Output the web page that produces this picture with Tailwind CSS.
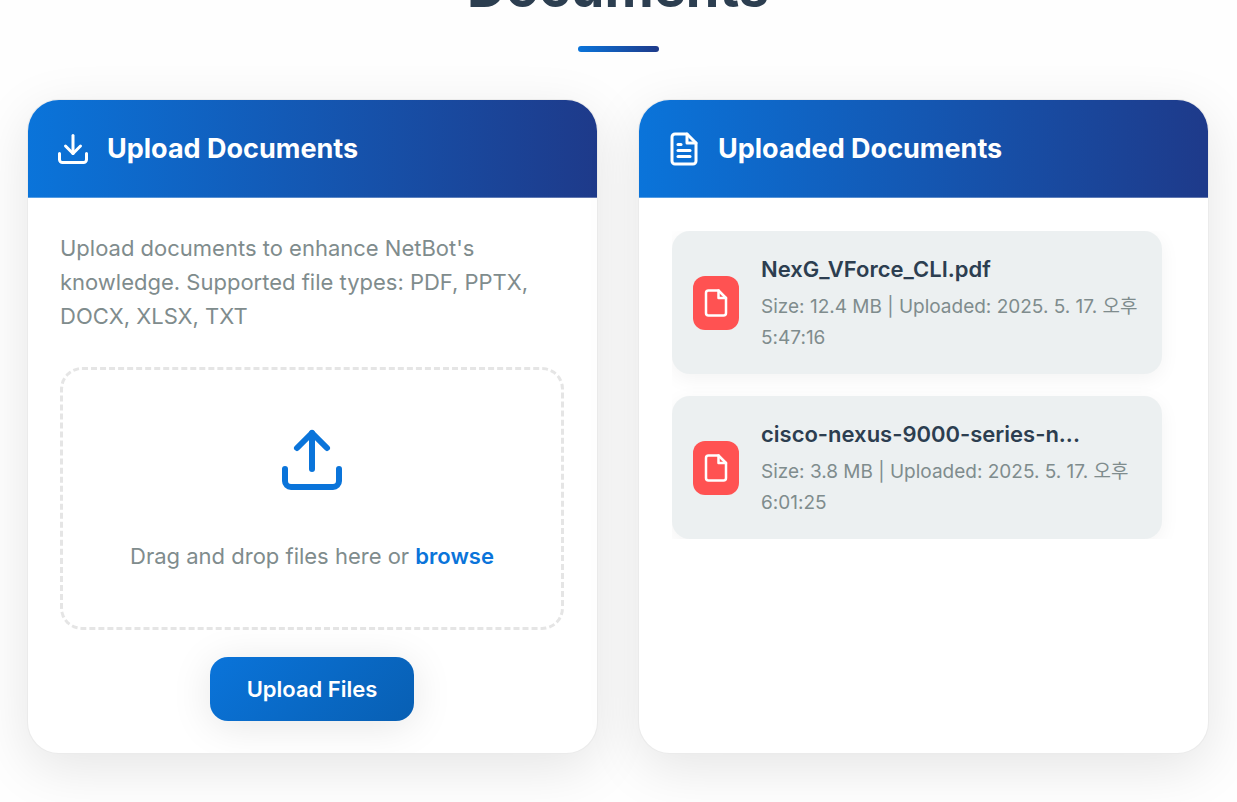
<!DOCTYPE html>
<html lang="en">
<head>
<meta charset="utf-8">
<meta name="viewport" content="width=device-width, initial-scale=1">
<title>Documents</title>
<script src="https://cdn.jsdelivr.net/npm/@tailwindcss/browser@4"></script>
</head>
<body class="bg-[#fefefe] font-[Inter,'Noto_Sans_CJK_KR',sans-serif] text-[#7f8c8d] overflow-x-hidden">
<main class="pl-[27px] pr-7 pb-12">
  <header class="flex flex-col items-center">
    <h1 class="-mt-[54px] text-[54px] leading-[84px] font-bold text-[#2c3e50]">Documents</h1>
    <div class="mt-[16px] h-[6px] w-[81px] rounded-[3px] bg-linear-to-r/srgb from-[#0a74da] to-[#1e3a8a]"></div>
  </header>

  <div class="mt-[47px] grid grid-cols-2 gap-10">
    <section class="overflow-hidden rounded-[32px] border border-black/8 bg-white shadow-[0_14px_54px_rgba(0,0,0,0.1)]">
      <div class="flex items-center gap-4 border-b border-white/30 bg-linear-to-r/srgb from-[#0a74da] to-[#1e3a8a] px-[27px] py-[28px] text-white">
        <svg class="size-9" viewBox="0 0 24 24" fill="none" stroke="currentColor" stroke-width="2" stroke-linecap="round" stroke-linejoin="round" aria-hidden="true"><path d="M21 15v4a2 2 0 0 1-2 2H5a2 2 0 0 1-2-2v-4"/><path d="M7 10l5 5 5-5"/><path d="M12 15V3"/></svg>
        <h2 class="text-[27px] leading-[41px] font-bold">Upload Documents</h2>
      </div>
      <div class="p-8 pt-[33px] pr-[33px]">
        <p class="text-[22px] leading-[34px]">Upload documents to enhance NetBot's knowledge. Supported file types: PDF, PPTX, DOCX, XLSX, TXT</p>
        <div class="mt-[34px] flex flex-col items-center rounded-[22px] border-3 border-dashed border-[#e5e5e5] py-[54px]">
          <svg class="size-[72px] text-[#0a74da]" viewBox="0 0 24 24" fill="none" stroke="currentColor" stroke-width="2" stroke-linecap="round" stroke-linejoin="round" aria-hidden="true"><path d="M21 15v4a2 2 0 0 1-2 2H5a2 2 0 0 1-2-2v-4"/><path d="M17 8l-5-5-5 5"/><path d="M12 3v12"/></svg>
          <p class="mt-[43px] text-[22px] leading-[34px]">Drag and drop files here or <button type="button" class="font-semibold text-[#0a74da]">browse</button></p>
        </div>
        <button type="button" class="mx-auto mt-[27px] block rounded-[18px] bg-linear-135/srgb from-[#0a74da] to-[#085fb3] px-[37px] py-[15px] text-[22px] leading-[34px] font-semibold text-white shadow-[0_5px_40px_rgba(0,0,0,0.1)]">Upload Files</button>
      </div>
    </section>

    <section class="overflow-hidden rounded-[32px] border border-black/8 bg-white shadow-[0_14px_54px_rgba(0,0,0,0.1)]">
      <div class="flex items-center gap-4 border-b border-white/30 bg-linear-to-r/srgb from-[#0a74da] to-[#1e3a8a] px-[27px] py-[28px] text-white">
        <svg class="size-9" viewBox="0 0 24 24" fill="none" stroke="currentColor" stroke-width="2" stroke-linecap="round" stroke-linejoin="round" aria-hidden="true"><path d="M14 2H6a2 2 0 0 0-2 2v16a2 2 0 0 0 2 2h12a2 2 0 0 0 2-2V8z"/><path d="M14 2v6h6"/><path d="M16 13H8"/><path d="M16 17H8"/><path d="M10 9H8"/></svg>
        <h2 class="text-[27px] leading-[41px] font-bold">Uploaded Documents</h2>
      </div>
      <div class="p-8 pt-[33px] pl-[33px]">
        <ul class="flex flex-col gap-[22px] overflow-hidden pr-[14px]">
          <li class="flex items-center gap-[22px] rounded-[18px] bg-[#ecf0f1] px-[21px] pt-[22px] pb-[21px] shadow-[0_5px_20px_rgba(0,0,0,0.05)]">
            <span class="grid h-[54px] w-[46px] shrink-0 place-items-center rounded-[12px] bg-[#ff5252] text-white">
              <svg class="size-[30px]" viewBox="0 0 24 24" fill="none" stroke="currentColor" stroke-width="2" stroke-linecap="round" stroke-linejoin="round" aria-hidden="true"><path d="M14 2H6a2 2 0 0 0-2 2v16a2 2 0 0 0 2 2h12a2 2 0 0 0 2-2V8z"/><path d="M14 2v6h6"/></svg>
            </span>
            <div class="min-w-0 flex-1">
              <h3 class="truncate text-[22px] leading-[32px] font-semibold text-[#2c3e50]">NexG_VForce_CLI.pdf</h3>
              <p class="mt-[6px] text-[19px] leading-[31px]">Size: 12.4 MB | Uploaded: 2025. 5. 17. 오후 5:47:16</p>
            </div>
          </li>
          <li class="flex items-center gap-[22px] rounded-[18px] bg-[#ecf0f1] px-[21px] pt-[22px] pb-[21px] shadow-[0_5px_20px_rgba(0,0,0,0.05)]">
            <span class="grid h-[54px] w-[46px] shrink-0 place-items-center rounded-[12px] bg-[#ff5252] text-white">
              <svg class="size-[30px]" viewBox="0 0 24 24" fill="none" stroke="currentColor" stroke-width="2" stroke-linecap="round" stroke-linejoin="round" aria-hidden="true"><path d="M14 2H6a2 2 0 0 0-2 2v16a2 2 0 0 0 2 2h12a2 2 0 0 0 2-2V8z"/><path d="M14 2v6h6"/></svg>
            </span>
            <div class="min-w-0 flex-1">
              <h3 class="truncate text-[22px] leading-[32px] font-semibold text-[#2c3e50]">cisco-nexus-9000-series-n...</h3>
              <p class="mt-[6px] text-[19px] leading-[31px]">Size: 3.8 MB | Uploaded: 2025. 5. 17. 오후 6:01:25</p>
            </div>
          </li>
        </ul>
      </div>
    </section>
  </div>
</main>
</body>
</html>
